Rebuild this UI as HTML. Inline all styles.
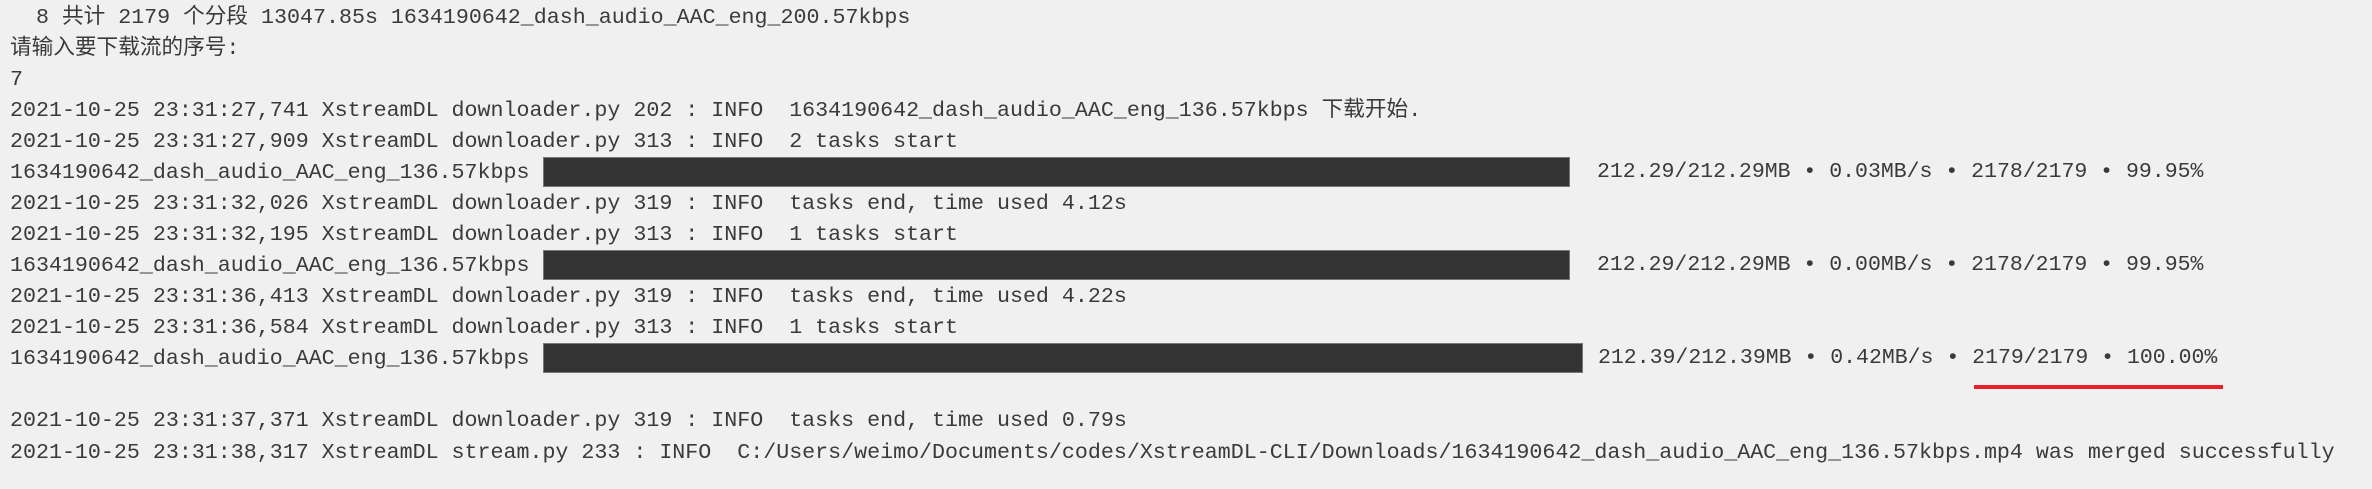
<!DOCTYPE html>
<html><head><meta charset="utf-8"><style>
html,body{margin:0;padding:0;}
body{width:2372px;height:489px;background:#f0f0f0;position:relative;overflow:hidden;
font-family:"Liberation Mono","Noto Sans CJK SC",monospace;font-size:21.65px;color:#3a3a3a;}
.l{position:absolute;left:10px;white-space:pre;height:31px;line-height:31px;}
.bar{position:absolute;left:543px;height:30px;background:#333;border:1px solid #777;box-sizing:border-box;}
.r{position:absolute;white-space:pre;line-height:31px;height:31px;font-size:21.5px;}
.u{position:absolute;left:1974px;width:249px;top:385px;height:4px;background:#e8202a;}
</style></head><body>
<div class="l" style="top:2px">  8 共计 2179 个分段 13047.85s 1634190642_dash_audio_AAC_eng_200.57kbps</div>
<div class="l" style="top:33px">请输入要下载流的序号:</div>
<div class="l" style="top:64px">7</div>
<div class="l" style="top:95px">2021-10-25 23:31:27,741 XstreamDL downloader.py 202 : INFO  1634190642_dash_audio_AAC_eng_136.57kbps 下载开始.</div>
<div class="l" style="top:126px">2021-10-25 23:31:27,909 XstreamDL downloader.py 313 : INFO  2 tasks start</div>
<div class="l" style="top:157px">1634190642_dash_audio_AAC_eng_136.57kbps</div>
<div class="bar" style="top:157px;width:1027px"></div>
<div class="r" style="top:157px;left:1597px">212.29/212.29MB • 0.03MB/s • 2178/2179 • 99.95%</div>
<div class="l" style="top:188px">2021-10-25 23:31:32,026 XstreamDL downloader.py 319 : INFO  tasks end, time used 4.12s</div>
<div class="l" style="top:219px">2021-10-25 23:31:32,195 XstreamDL downloader.py 313 : INFO  1 tasks start</div>
<div class="l" style="top:250px">1634190642_dash_audio_AAC_eng_136.57kbps</div>
<div class="bar" style="top:250px;width:1027px"></div>
<div class="r" style="top:250px;left:1597px">212.29/212.29MB • 0.00MB/s • 2178/2179 • 99.95%</div>
<div class="l" style="top:281px">2021-10-25 23:31:36,413 XstreamDL downloader.py 319 : INFO  tasks end, time used 4.22s</div>
<div class="l" style="top:312px">2021-10-25 23:31:36,584 XstreamDL downloader.py 313 : INFO  1 tasks start</div>
<div class="l" style="top:343px">1634190642_dash_audio_AAC_eng_136.57kbps</div>
<div class="bar" style="top:343px;width:1040px"></div>
<div class="r" style="top:343px;left:1598px">212.39/212.39MB • 0.42MB/s • 2179/2179 • 100.00%</div>
<div class="u"></div>
<div class="l" style="top:405px">2021-10-25 23:31:37,371 XstreamDL downloader.py 319 : INFO  tasks end, time used 0.79s</div>
<div class="l" style="top:437px">2021-10-25 23:31:38,317 XstreamDL stream.py 233 : INFO  C:/Users/weimo/Documents/codes/XstreamDL-CLI/Downloads/1634190642_dash_audio_AAC_eng_136.57kbps.mp4 was merged successfully</div>
</body></html>
